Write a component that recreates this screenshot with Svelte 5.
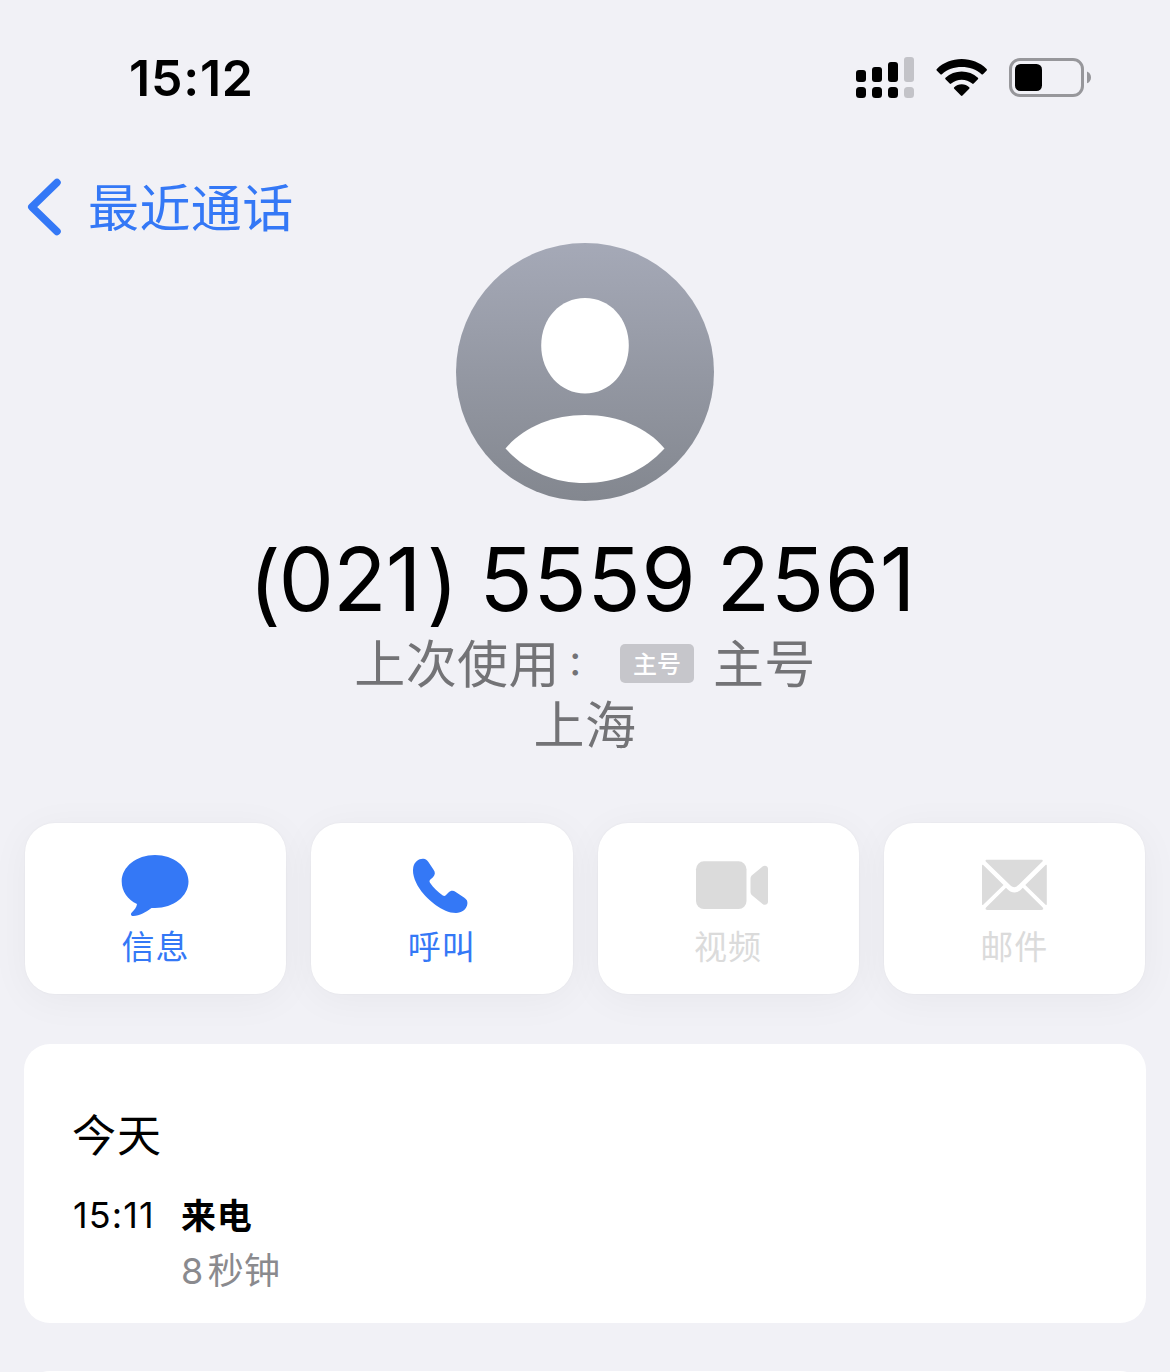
<script lang="ts">
	interface Action {
		id: string;
		label: string;
		enabled: boolean;
	}

	interface Call {
		time: string;
		kind: string;
		duration: string;
		unit: string;
	}

	const actions: Action[] = [
		{ id: 'message', label: '信息', enabled: true },
		{ id: 'call', label: '呼叫', enabled: true },
		{ id: 'video', label: '视频', enabled: false },
		{ id: 'mail', label: '邮件', enabled: false }
	];

	const calls: Call[] = [{ time: '15:11', kind: '来电', duration: '8', unit: '秒钟' }];
</script>

<div class="screen">
	<header class="status-bar">
		<span class="clock">15:12</span>
		<div class="indicators">
			<svg class="signal" viewBox="0 0 58 42" aria-hidden="true">
				<rect x="0" y="13" width="10" height="12" rx="3" />
				<rect x="16" y="10" width="10" height="15" rx="3" />
				<rect x="32" y="5" width="10" height="20" rx="3" />
				<rect class="off" x="48" y="0" width="10" height="25" rx="3" />
				<rect x="0" y="30" width="10" height="11" rx="3.5" />
				<rect x="16" y="30" width="10" height="11" rx="3.5" />
				<rect x="32" y="30" width="10" height="11" rx="3.5" />
				<rect class="off" x="48" y="30" width="10" height="11" rx="3.5" />
			</svg>
			<svg class="wifi" viewBox="0 0 52 38" aria-hidden="true">
				<path d="M.8 9.900C7.500 3.400 16.200 0 25.700 0s18.200 3.400 24.900 9.900c.5.5.5 1 .1 1.500l-3.700 3.800c-.5.5-1 .5-1.500 0C40.300 10.500 33.300 8 25.700 8S11.100 10.500 5.900 15.200c-.5.5-1 .5-1.500 0L.7 11.400c-.4-.5-.4-1 .1-1.500Z" />
				<path d="M9.500 18.800c4.500-4 10.200-6.200 16.200-6.200s11.700 2.200 16.200 6.200c.5.5.5 1 0 1.500l-4.200 4.200c-.5.5-1 .5-1.500.1-3-2.500-6.600-3.900-10.500-3.900s-7.500 1.400-10.500 3.900c-.5.400-1 .4-1.500-.1l-4.200-4.200c-.5-.5-.5-1 0-1.500Z" />
				<path d="M18.200 28.200c2-1.900 4.600-3 7.500-3s5.500 1.100 7.500 3c.5.500.5 1 0 1.500l-6.700 6.900c-.6.5-1 .5-1.600 0l-6.700-6.900c-.5-.5-.5-1 0-1.500Z" />
			</svg>
			<svg class="battery" viewBox="0 0 83 39" aria-hidden="true">
				<rect class="shell" x="1.500" y="1.500" width="72" height="36" rx="9.500" />
				<rect x="6" y="6" width="27" height="27" rx="5.500" />
				<path class="cap" d="M78 13.500c2.500 1 4 3.200 4 5.900s-1.500 4.900-4 5.900Z" />
			</svg>
		</div>
	</header>

	<nav class="nav">
		<svg class="chevron" viewBox="0 0 34 58" aria-hidden="true">
			<path d="M30 4.500 4.800 29 30 53.500" />
		</svg>
		<span class="back">最近通话</span>
	</nav>

	<section class="contact">
		<svg class="avatar" viewBox="0 0 258 258" aria-hidden="true">
			<defs>
				<linearGradient id="avatar-fill" x1="0" y1="0" x2="0" y2="1">
					<stop offset="0" stop-color="#a5a9b7" />
					<stop offset="1" stop-color="#83878f" />
				</linearGradient>
			</defs>
			<circle cx="129" cy="129" r="129" fill="url(#avatar-fill)" />
			<path
				fill="#fff"
				d="M129 55c25 0 43.800 20.500 43.800 47.500S153.500 150.500 129 150.500 85.200 129.500 85.200 102.500 104 55 129 55Z"
			/>
			<path
				fill="#fff"
				d="M49.500 205.500C67 184.500 96 172 129 172s62 12.500 79.500 33.500C188 228 160 240 129 240s-59-12-79.500-34.500Z"
			/>
		</svg>
		<h1 class="number">
			<span class="paren open">(</span><span class="area">021</span><span class="paren close">)</span> 5559 2561
		</h1>
		<div class="last-used">
			<span>上次使用</span><span class="colon">：</span>
			<span class="line-tag">主号</span>
			<span>主号</span>
		</div>
		<div class="region">上海</div>
	</section>

	<div class="actions">
		{#each actions as action (action.id)}
			<button class="action" disabled={!action.enabled}>
				<svg class="action-icon" viewBox="0 0 80 66" aria-hidden="true">
					{#if action.id === 'message'}
						<path
							d="M39 2c18.500 0 33.500 11.800 33.500 26.500S57.500 55 39 55l-3.500-.1C30 59 23.500 62.500 17.500 63c-2.500.2-3.300-1.800-1.700-3.500 2.500-2.600 5-5.500 5.200-8.500C11.500 46.500 5.700 38.500 5.700 28.500 5.700 13.800 20.500 2 39 2Z"
						/>
					{:else if action.id === 'call'}
						<path
							d="M11.300 14C12.500 8.500 17 5.300 21.500 5.700c2 .2 3.700 1.600 4.900 3.300l5 7.500c2.100 3 1.900 5.200-.4 7.700l-2.600 2.400c-1 1-1.200 1.700-.4 3.100 3.500 5 8 9.500 12.800 12.700 1.300.8 2.200.6 3.200-.4l2.500-2.500c2-2 4.700-2.200 7.200-.6l8.300 5.600c2.800 2 3.700 3.500 3.400 6.300C64.800 56.500 59.500 60 54 60 40 60 26 46.500 19.500 38.500 14 31 9.800 22 11.300 14Z"
						/>
					{:else if action.id === 'video'}
						<rect x="8" y="8.300" width="50.500" height="47.700" rx="8" />
						<path d="M62.500 26c0-1.800.5-3 1.800-4.100L74.600 13.500c2.200-1.800 5.400-.5 5.400 2.300v33c0 2.800-3.200 4-5.400 2.200L64.300 42.500c-1.300-1.100-1.800-2.300-1.800-4.100Z" />
					{:else}
						<path d="M13 6.700h54.500c1.200 0 1.600 1 .9 1.800L45 31.500c-3.500 3.500-6 3.500-9.500 0L11.800 8.500C11 7.700 11.700 6.700 13 6.700Z" />
						<path d="M8 12.500v38.800c0 .8.600 1 1.200.4L29.500 32 9.200 12C8.600 11.500 8 11.700 8 12.500Z" />
						<path d="M72.800 12.500v38.800c0 .8-.6 1-1.200.4L51.300 32l20.300-20c.6-.5 1.200-.3 1.200.5Z" />
						<path d="m32 34.700 1.500 1.500c4.500 4.400 9.300 4.400 13.800 0l1.500-1.500 19.700 19.600c1.200 1.200 1 2.700-1 2.700H13.300c-2 0-2.200-1.500-1-2.700Z" />
					{/if}
				</svg>
				<span class="action-label">{action.label}</span>
			</button>
		{/each}
	</div>

	<section class="history">
		<h2 class="day">今天</h2>
		{#each calls as call}
			<div class="call">
				<span class="time">{call.time}</span>
				<div class="detail">
					<div class="kind">{call.kind}</div>
					<div class="duration"><span class="amount">{call.duration}</span>{call.unit}</div>
				</div>
			</div>
		{/each}
	</section>

	<section class="next-group"></section>
</div>

<style>
	:global(body) {
		background: #f1f1f6;
	}

	.screen {
		box-sizing: border-box;
		width: 1170px;
		height: 1372px;
		overflow: hidden;
		display: flex;
		flex-direction: column;
		background: #f1f1f6;
		font-family: 'Noto Sans CJK SC', sans-serif;
		color: #000;
	}

	.status-bar {
		display: flex;
		justify-content: space-between;
		align-items: center;
		height: 156px;
		padding: 0 78px 0 129px;
		box-sizing: border-box;
		flex: none;
	}

	.clock {
		font-family: Inter, sans-serif;
		font-size: 50px;
		font-weight: 600;
		line-height: 60px;
		letter-spacing: 0.8px;
	}

	.indicators {
		display: flex;
		align-items: center;
	}

	.signal {
		width: 58px;
		height: 42px;
		margin-right: 22px;
	}

	.signal .off {
		fill: #c3c3c8;
	}

	.wifi {
		width: 52px;
		height: 38px;
		margin-right: 21px;
	}

	.battery {
		width: 83px;
		height: 39px;
		margin-bottom: 2px;
	}

	.battery .shell {
		fill: none;
		stroke: #97979b;
		stroke-width: 3;
	}

	.battery .cap {
		fill: #97979b;
	}

	.nav {
		display: flex;
		align-items: center;
		gap: 27px;
		height: 87px;
		padding: 15px 0 0 27px;
		box-sizing: border-box;
		flex: none;
		color: #3478f6;
	}

	.chevron {
		width: 34px;
		height: 58px;
		fill: none;
		stroke: currentColor;
		stroke-width: 7.500;
		stroke-linecap: round;
		stroke-linejoin: round;
	}

	.back {
		font-size: 51px;
		line-height: 58px;
		letter-spacing: 0.4px;
		margin-top: -5px;
	}

	.contact {
		display: flex;
		flex-direction: column;
		align-items: center;
		height: 579px;
		flex: none;
	}

	.avatar {
		width: 258px;
		height: 258px;
		flex: none;
	}

	.number {
		height: 104px;
		margin: 26px 5px 0 0;
		font-family: Inter, sans-serif;
		font-size: 88px;
		font-weight: 400;
		line-height: 104px;
		letter-spacing: 0.5px;
		word-spacing: -5px;
		white-space: nowrap;
	}

	.area {
		letter-spacing: -1px;
	}

	/* Inter lifts parentheses beside digits, so drop them back */
	.paren {
		vertical-align: -4px;
		line-height: 1;
	}

	.open {
		margin-right: -3px;
	}

	.close {
		margin-left: 6px;
	}

	.last-used {
		display: flex;
		align-items: center;
		height: 62px;
		margin-top: -1px;
		font-size: 51px;
		line-height: 62px;
		letter-spacing: 0.4px;
		color: #737376;
	}

	.colon {
		box-sizing: border-box;
		width: 60px;
		padding-left: 7px;
		font-size: 33px;
		font-weight: 500;
	}

	.line-tag {
		display: flex;
		align-items: center;
		justify-content: center;
		width: 74px;
		height: 39px;
		margin: 4px 19px 0 0;
		border-radius: 5px;
		background: #c6c6cb;
		color: #fff;
		font-size: 24px;
		font-weight: 500;
		line-height: 36px;
		letter-spacing: 0;
	}

	.region {
		margin-top: -1px;
		font-size: 51px;
		line-height: 62px;
		letter-spacing: 0.4px;
		color: #737376;
	}

	.actions {
		display: grid;
		grid-template-columns: repeat(4, 1fr);
		gap: 25px;
		padding: 0 25px;
		margin-top: 1px;
		height: 171px;
		flex: none;
	}

	.action {
		display: flex;
		flex-direction: column;
		align-items: center;
		padding: 30px 0 0;
		border: 0;
		border-radius: 30px;
		background: #fff;
		box-shadow:
			0 0 2px rgba(0, 0, 0, 0.05),
			0 6px 40px rgba(0, 0, 0, 0.045);
		color: #3478f6;
		font-family: inherit;
	}

	.action:disabled {
		color: #dbdbdb;
	}

	.action-icon {
		width: 80px;
		height: 66px;
		flex: none;
		fill: currentColor;
	}

	.action-label {
		font-size: 33px;
		line-height: 44px;
		letter-spacing: 1.2px;
		margin-top: 4px;
	}

	.history {
		box-sizing: border-box;
		height: 279px;
		margin: 50px 24px 0;
		padding: 60px 48px 0;
		border-radius: 26px;
		background: #fff;
		flex: none;
	}

	.day {
		margin: 0;
		font-size: 44px;
		font-weight: 400;
		line-height: 58px;
		letter-spacing: 1px;
	}

	.call {
		display: flex;
		margin: 25px 0 0 1px;
		font-size: 36px;
		line-height: 54px;
	}

	.time {
		width: 108px;
		padding-top: 1px;
		font-family: Inter, sans-serif;
		font-size: 36px;
		letter-spacing: 1.1px;
	}

	.kind {
		font-weight: 700;
		font-size: 35px;
		letter-spacing: 0.8px;
	}

	.duration {
		color: #8a8a8e;
		letter-spacing: 0.4px;
	}

	.amount {
		font-family: Inter, sans-serif;
		margin-right: 4px;
	}

	.next-group {
		height: 200px;
		margin: 48px 24px 0;
		border-radius: 26px;
		background: #fff;
		flex: none;
	}
</style>
